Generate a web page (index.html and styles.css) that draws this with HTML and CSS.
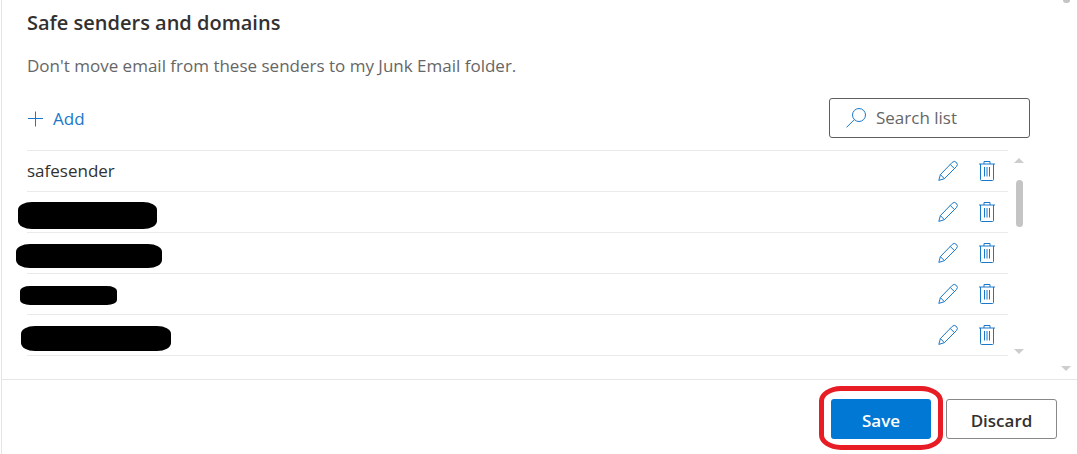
FILE: index.html
```
<!DOCTYPE html>
<html lang="en">
  <head>
    <meta charset="UTF-8" />
    <meta name="viewport" content="width=device-width, initial-scale=1.0" />
    <title>Junk email</title>
    <link rel="stylesheet" href="styles.css">
  </head>

  <body>
    <!-- shared icons -->
    <svg class="sprite" aria-hidden="true">
      <symbol id="pencil" viewBox="0 0 20 22">
        <path d="M.8 20.4 L2.4 14.6 L14.2 2.4 a2.9 2.9 0 0 1 4.2 4.2 L6.4 18.7 Z M2.4 14.6 L6.4 18.7 M12.2 4.4 L16.4 8.6" />
      </symbol>
      <symbol id="trash" viewBox="0 0 18 22">
        <path d="M1 4 H17 M6 4 V1.5 H12 V4 M2.5 4 V19.5 a1 1 0 0 0 1 1 H14.5 a1 1 0 0 0 1 -1 V4 M6.5 7 V16.5 M9 7 V16.5 M11.5 7 V16.5" />
      </symbol>
    </svg>

    <div class="panel">
      <div class="content">
        <main>
          <h1>Safe senders and domains</h1>
          <p class="hint">Don't move email from these senders to my Junk Email folder.</p>

          <div class="toolbar">
            <button type="button" class="add">
              <svg width="16" height="16" viewBox="0 0 16 16"><path d="M8.5 .5 V15.5 M1 7.5 H16" /></svg>
              Add
            </button>
            <label class="search">
              <svg width="22" height="22" viewBox="0 0 22 22"><circle cx="13" cy="8" r="6.5" /><path d="M8.3 12.6 L.5 20.4" /></svg>
              <input type="text" placeholder="Search list" aria-label="Search list" />
            </label>
          </div>

          <div class="list">
            <ul>
              <li>
                <span class="sender">safesender</span>
                <button type="button" aria-label="Edit"><svg width="20" height="22"><use href="#pencil" /></svg></button>
                <button type="button" aria-label="Delete"><svg width="18" height="22"><use href="#trash" /></svg></button>
              </li>
              <li>
                <span class="sender"><span class="redact redact-1"></span></span>
                <button type="button" aria-label="Edit"><svg width="20" height="22"><use href="#pencil" /></svg></button>
                <button type="button" aria-label="Delete"><svg width="18" height="22"><use href="#trash" /></svg></button>
              </li>
              <li>
                <span class="sender"><span class="redact redact-2"></span></span>
                <button type="button" aria-label="Edit"><svg width="20" height="22"><use href="#pencil" /></svg></button>
                <button type="button" aria-label="Delete"><svg width="18" height="22"><use href="#trash" /></svg></button>
              </li>
              <li>
                <span class="sender"><span class="redact redact-3"></span></span>
                <button type="button" aria-label="Edit"><svg width="20" height="22"><use href="#pencil" /></svg></button>
                <button type="button" aria-label="Delete"><svg width="18" height="22"><use href="#trash" /></svg></button>
              </li>
              <li>
                <span class="sender"><span class="redact redact-4"></span></span>
                <button type="button" aria-label="Edit"><svg width="20" height="22"><use href="#pencil" /></svg></button>
                <button type="button" aria-label="Delete"><svg width="18" height="22"><use href="#trash" /></svg></button>
              </li>
            </ul>
            <div class="scrollbar list-scroll">
              <span class="arrow-up"></span>
              <span class="thumb"></span>
              <span class="arrow-down"></span>
            </div>
          </div>
        </main>
        <div class="scrollbar page-scroll">
          <span class="thumb"></span>
          <span class="arrow-down"></span>
        </div>
      </div>

      <footer>
        <div class="marked"><button type="button" class="save">Save</button></div>
        <button type="button" class="discard">Discard</button>
      </footer>
    </div>
  </body>
</html>
```
FILE: styles.css
```
* {
  box-sizing: border-box;
}

body {
  margin: 0;
  background: #fff;
  color: #323130;
  font-family: "Segoe UI", "Open Sans", "Noto Sans", sans-serif;
  font-size: 17px;
  line-height: 24px;
}

button,
input {
  font: inherit;
  color: inherit;
}

button {
  padding: 0;
  border: 0;
  background: none;
  cursor: pointer;
}

svg {
  display: block;
  fill: none;
  stroke: #1a78c8;
}

.sprite {
  position: absolute;
  width: 0;
  height: 0;
}

.panel {
  min-height: 100vh;
  margin-left: 1px;
  border-left: 1px solid #e4e4e4;
}

.content {
  display: flex;
  border-bottom: 1px solid #e6e6e6;
}

main {
  flex: 1;
  padding: 11px 25px 23px;
}

h1 {
  margin: 0;
  font-size: 20px;
  font-weight: 600;
  line-height: 24px;
}

.hint {
  margin: 19px 0 20px;
  color: #666;
}

.toolbar {
  display: flex;
  align-items: center;
  justify-content: space-between;
  margin-bottom: 12px;
}

.add {
  display: flex;
  align-items: center;
  gap: 10px;
  padding-top: 2px;
  color: #1a78c8;
}

.search {
  display: flex;
  align-items: center;
  gap: 8px;
  width: 201px;
  height: 40px;
  padding: 0 16px;
  border: 1px solid #605e5c;
  border-radius: 3px;
}

.search svg {
  flex: none;
}

.search input {
  min-width: 0;
  width: 100%;
  padding: 0;
  border: 0;
  outline: 0;
  background: none;
}

.search input::placeholder {
  color: #666;
  opacity: 1;
}

.list {
  display: flex;
}

ul {
  flex: 1;
  margin: 0;
  padding: 0;
  border-top: 1px solid #eaeaea;
  list-style: none;
}

li {
  display: flex;
  align-items: center;
  gap: 20px;
  height: 41px;
  padding-right: 12px;
  border-bottom: 1px solid #eaeaea;
}

.sender {
  position: relative;
  flex: 1;
  min-height: 24px;
}

/* blacked out addresses, drawn over the rows */
.redact {
  position: absolute;
  background: #000;
  border-radius: 14px / 8px;
}

.redact-1 {
  top: 2px;
  left: -9px;
  width: 139px;
  height: 27px;
}

.redact-2 {
  top: 3px;
  left: -11px;
  width: 146px;
  height: 24px;
}

.redact-3 {
  top: 4px;
  left: -7px;
  width: 97px;
  height: 19px;
  border-radius: 10px / 5px;
}

.redact-4 {
  top: 3px;
  left: -6px;
  width: 150px;
  height: 25px;
}

.scrollbar {
  display: flex;
  flex-direction: column;
  align-items: center;
  width: 22px;
}

.thumb {
  width: 7px;
  border-radius: 4px;
  background: #c4c4c4;
}

.arrow-up,
.arrow-down {
  border: 5px solid transparent;
}

.arrow-up {
  border-top: 0;
  border-bottom-color: #cdcdcd;
}

.arrow-down {
  margin-top: auto;
  border-bottom: 0;
  border-top-color: #cdcdcd;
}

.list-scroll {
  padding: 8px 0 2px;
}

.list-scroll .thumb {
  height: 47px;
  margin-top: 17px;
}

.page-scroll {
  padding-bottom: 8px;
}

.page-scroll .thumb {
  height: 3px;
  border-radius: 0 0 4px 4px;
}

footer {
  display: flex;
  justify-content: flex-end;
  gap: 15px;
  padding: 19px 20px 14px;
}

footer button {
  height: 40px;
  padding-top: 3px;
  border-radius: 3px;
  font-weight: 600;
}

.save {
  width: 100px;
  background: #0078d4;
  color: #fff;
}

.discard {
  width: 111px;
  border: 1px solid #8a8886;
}

.marked {
  position: relative;
}

/* red ring around the save button */
.marked::after {
  content: "";
  position: absolute;
  inset: -13px -12px -11px;
  border: 5px solid #e81c24;
  border-radius: 22px / 15px;
  pointer-events: none;
}
```
